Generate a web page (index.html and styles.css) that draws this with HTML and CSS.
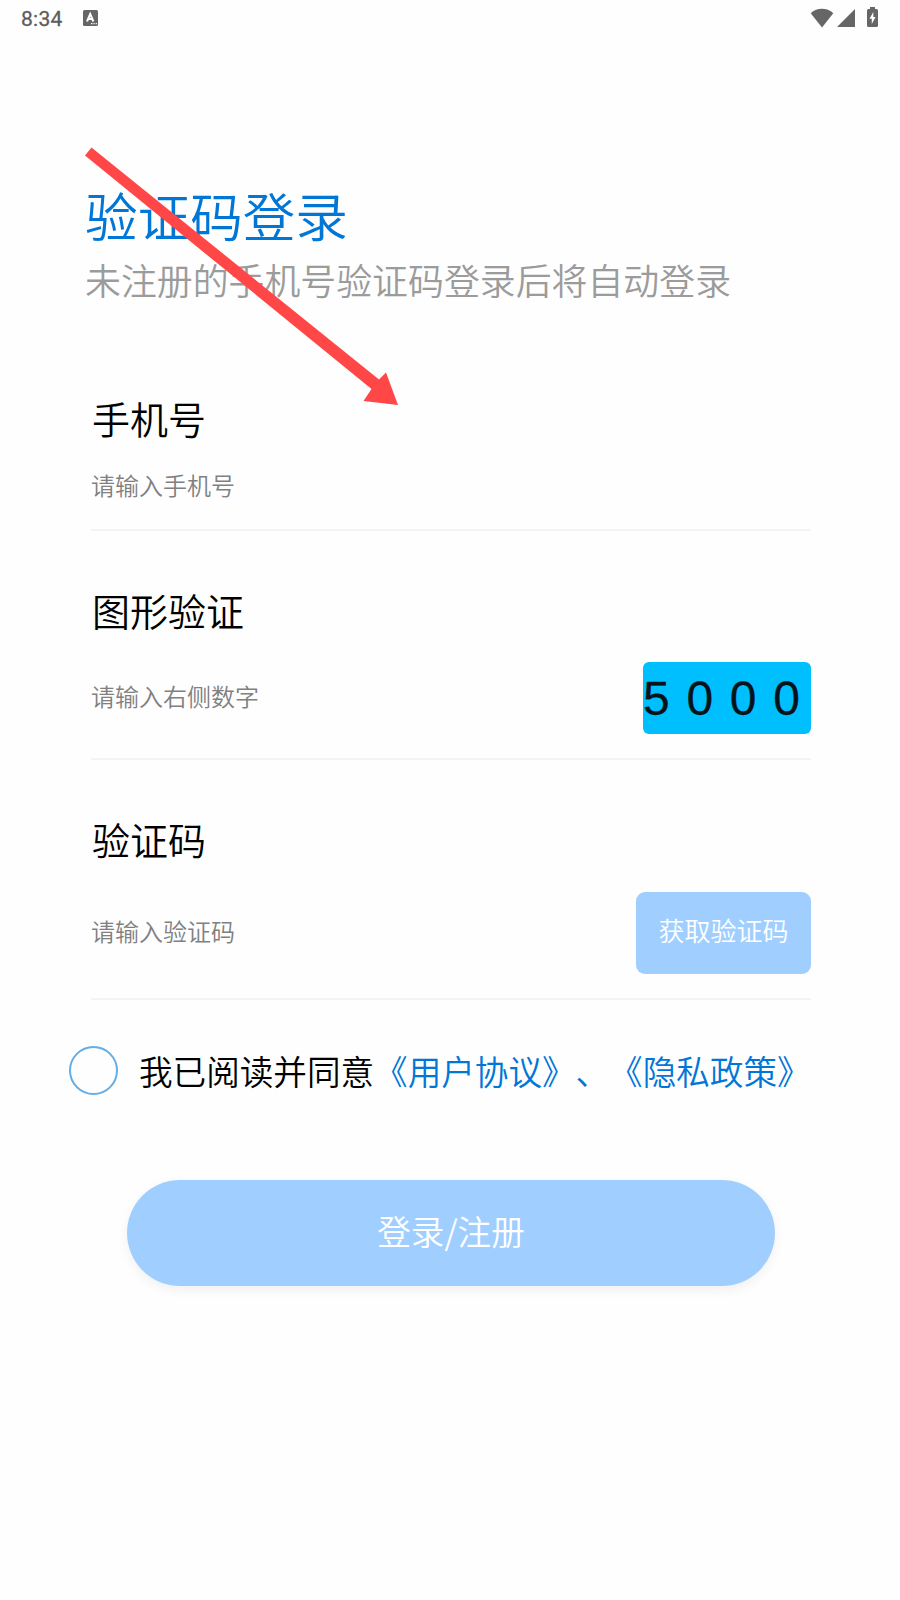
FILE: index.html
```
<!DOCTYPE html>
<html lang="zh-CN">
<head>
  <meta charset="UTF-8" />
  <meta name="viewport" content="width=device-width, initial-scale=1.0"/>
  <title>验证码登录</title>
  <link rel="stylesheet" href="styles.css">
</head>
<body>

<!-- STATUS BAR -->
<div class="status-bar">
  <span class="time">8:34</span>
  <svg class="app-icon" width="15" height="16" viewBox="0 0 15 16">
    <rect width="15" height="16" rx="1.5" fill="#666"/>
    <path d="M4 11.5 L7.2 4 L10.4 11.5 M5.3 9 H9.1" fill="none" stroke="#fff" stroke-width="2"/>
    <path d="M8 13.7 h1.5 M10.5 13.7 h1.2 M12.7 13.7 h1.2" stroke="#fff" stroke-width="1.3"/>
  </svg>
  <div class="status-icons">
    <svg class="wifi" width="24" height="20" viewBox="0 0 24 20">
      <path d="M12 19.5 L0.7 5.2 C7 -0.6 17 -0.6 23.3 5.2 Z" fill="#666"/>
    </svg>
    <svg class="signal" width="18" height="18" viewBox="0 0 18 18">
      <path d="M18 0 V18 H0 Z" fill="#666"/>
    </svg>
    <svg class="battery" width="11" height="20" viewBox="0 0 11 20">
      <path d="M3 0 H8 V2 H9.5 Q11 2 11 3.5 V18.5 Q11 20 9.5 20 H1.5 Q0 20 0 18.5 V3.5 Q0 2 1.5 2 H3 Z" fill="#666"/>
      <path d="M6.3 5 L2.5 11.7 H4.8 V17 L8.6 10 H6.3 Z" fill="#fff"/>
    </svg>
  </div>
</div>

<div class="container">
  <h1>验证码登录</h1>
  <p class="subtitle">未注册的手机号验证码登录后将自动登录</p>

  <!-- LOGIN FORM -->
  <form class="login-form">
    <div class="field field-phone">
      <label for="phone">手机号</label>
      <div class="field-row">
        <input type="text" id="phone" placeholder="请输入手机号" />
      </div>
    </div>

    <div class="field field-captcha">
      <label for="captcha">图形验证</label>
      <div class="field-row">
        <input type="text" id="captcha" placeholder="请输入右侧数字" />
        <div class="captcha"><span>5</span><span>0</span><span>0</span><span>0</span></div>
      </div>
    </div>

    <div class="field field-code">
      <label for="code">验证码</label>
      <div class="field-row">
        <input type="text" id="code" placeholder="请输入验证码" />
        <button type="button" class="code-btn">获取验证码</button>
      </div>
    </div>

    <div class="agreement">
      <span class="radio"></span>
      <p>我已阅读并同意<span class="link">《用户协议》、《隐私政策》</span></p>
    </div>

    <button type="button" class="login-btn">登录/注册</button>
  </form>
</div>

<svg class="arrow" width="320" height="264" viewBox="0 0 320 264">
  <path d="M6.5 2.5 L294 234.5 L301 227.5 L313 260 L278.5 256 L286.5 244 L0 10.5 Z" fill="#ff4747"/>
</svg>

</body>
</html>
```
FILE: styles.css
```
* {
  box-sizing: border-box;
}

body {
  font-family: "Noto Sans CJK SC", sans-serif;
  font-weight: 350;
  margin: 0;
  min-height: 1600px;
  background: #fefefe;
  color: #000;
}

.status-bar {
  display: flex;
  align-items: center;
  height: 36px;
  padding: 0 22px 0 21px;
}

.time {
  width: 62px;
  padding-top: 1px;
  font-family: Roboto, sans-serif;
  font-size: 21px;
  font-weight: 400;
  letter-spacing: 0.3px;
  color: #5c5c5c;
  -webkit-text-stroke: 0.3px #5c5c5c;
}

.status-icons {
  display: flex;
  align-items: center;
  margin-left: auto;
}

.wifi {
  margin-right: 3px;
}

.signal {
  margin-right: 12px;
}

.battery {
  margin-top: -2px;
}

.container {
  padding: 148px 89px 0 85px;
}

h1 {
  margin: 0;
  font-size: 52.6px;
  font-weight: 350;
  line-height: 60px;
  color: #0076d6;
}

.subtitle {
  margin: 10px 0 0;
  font-size: 35.9px;
  line-height: 50px;
  color: #9b9b9b;
}

.login-form {
  padding-left: 6px;
}

.field {
  display: flex;
  flex-direction: column;
  border-bottom: 2px solid #f4f4f4;
}

.field label {
  padding-left: 1px;
  font-size: 38px;
  line-height: 50px;
}

.field-row {
  display: flex;
  align-items: center;
  justify-content: space-between;
}

.field-phone {
  height: 138px;
  margin-top: 89px;
}

.field-phone .field-row {
  margin-top: 18px;
}

.field-captcha {
  height: 175px;
  margin-top: 54px;
}

.field-captcha .field-row {
  margin-top: 27px;
}

.field-code {
  height: 186px;
  margin-top: 54px;
}

.field-code .field-row {
  margin-top: 28px;
}

input {
  width: 400px;
  height: 46px;
  padding: 0;
  border: none;
  background: transparent;
  font-family: inherit;
  font-size: 24px;
  font-weight: inherit;
}

.field-captcha input,
.field-code input {
  padding-bottom: 5px;
}

input::placeholder {
  color: #808080;
}

.captcha {
  display: flex;
  gap: 16.7px;
  width: 168px;
  height: 72px;
  padding-top: 1px;
  border-radius: 6px;
  background: #00bfff;
  color: #06131a;
  font-family: "Liberation Sans", sans-serif;
  font-size: 48px;
  font-weight: 400;
  line-height: 72px;
  -webkit-text-stroke: 0.3px #06131a;
}

button {
  padding: 0;
  border: none;
  background: #a0cfff;
  color: #fff;
  font-family: inherit;
  font-weight: inherit;
}

.code-btn {
  width: 175px;
  height: 82px;
  padding-bottom: 8px;
  border-radius: 9px;
  font-size: 26px;
}

.agreement {
  display: flex;
  align-items: center;
  height: 50px;
  margin: 45px -10px 0 -22px;
}

.radio {
  flex-shrink: 0;
  width: 49px;
  height: 49px;
  border: 2.5px solid #62aee8;
  border-radius: 50%;
}

.agreement p {
  margin: 2px 0 0 21px;
  font-size: 33.6px;
  line-height: 50px;
  white-space: nowrap;
  text-spacing-trim: space-all;
}

.link {
  color: #0076d6;
}

.login-btn {
  display: block;
  width: 648px;
  height: 106px;
  margin: 85px 0 0 36px;
  padding-bottom: 6px;
  border-radius: 53px;
  font-size: 33.6px;
  box-shadow: 0 4px 12px rgba(0, 0, 0, 0.06);
}

/* pointer drawn over the heading */
.arrow {
  position: absolute;
  left: 85px;
  top: 145px;
}
```
